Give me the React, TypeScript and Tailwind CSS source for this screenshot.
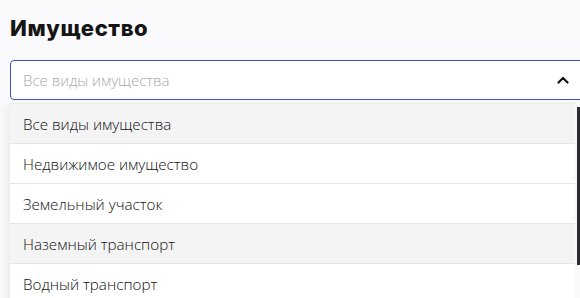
import { useState } from "react";

const options = [
  "Все виды имущества",
  "Недвижимое имущество",
  "Земельный участок",
  "Наземный транспорт",
  "Водный транспорт",
  "Воздушный транспорт",
];

export default function App() {
  const [hovered] = useState(3);
  const selected = 0;

  return (
    <main className="h-[298px] w-[580px] overflow-hidden bg-[#fafafc] font-['Open_Sans',sans-serif]">
      <div className="pl-[10px] pt-[14px]">
        <h1 className="font-['Inter',sans-serif] text-[22px] font-extrabold leading-[28px] tracking-[0.6px] text-[#151515]">
          Имущество
        </h1>

        <div className="mt-[18px] flex h-[40px] w-[600px] items-center rounded-[4px] border border-[#3d52d5] bg-white pl-[12px] pr-[40px]">
          <span className="flex-1 text-[15px] font-light text-[#a9a9a9]">Все виды имущества</span>
          <svg width="12" height="8" viewBox="0 0 12 8">
            <path d="M1.5 6.5 L6 2 L10.5 6.5" fill="none" stroke="#111" strokeWidth="2.2" strokeLinecap="round" strokeLinejoin="round" />
          </svg>
        </div>

        <div className="mt-[3px] flex w-[570px]">
          <ul className="w-[565px] border-t border-[#ececec] bg-white shadow-[-4px_2px_8px_rgba(0,0,0,0.06)]">
            {options.map((o, i) => (
              <li
                key={o}
                className={`flex h-[40px] items-center border-b border-[#e6e6e6] pl-[13px] pt-[2px] text-[15.2px] font-light text-[#111] ${
                  i === selected || i === hovered ? "bg-[#f4f4f5]" : "bg-white"
                }`}
              >
                {o}
              </li>
            ))}
          </ul>
          <div className="ml-[2px] w-[3px]">
            <div className="mt-[4px] h-[158px] w-[3px] bg-[#2b2b2f]" />
          </div>
        </div>
      </div>
    </main>
  );
}
